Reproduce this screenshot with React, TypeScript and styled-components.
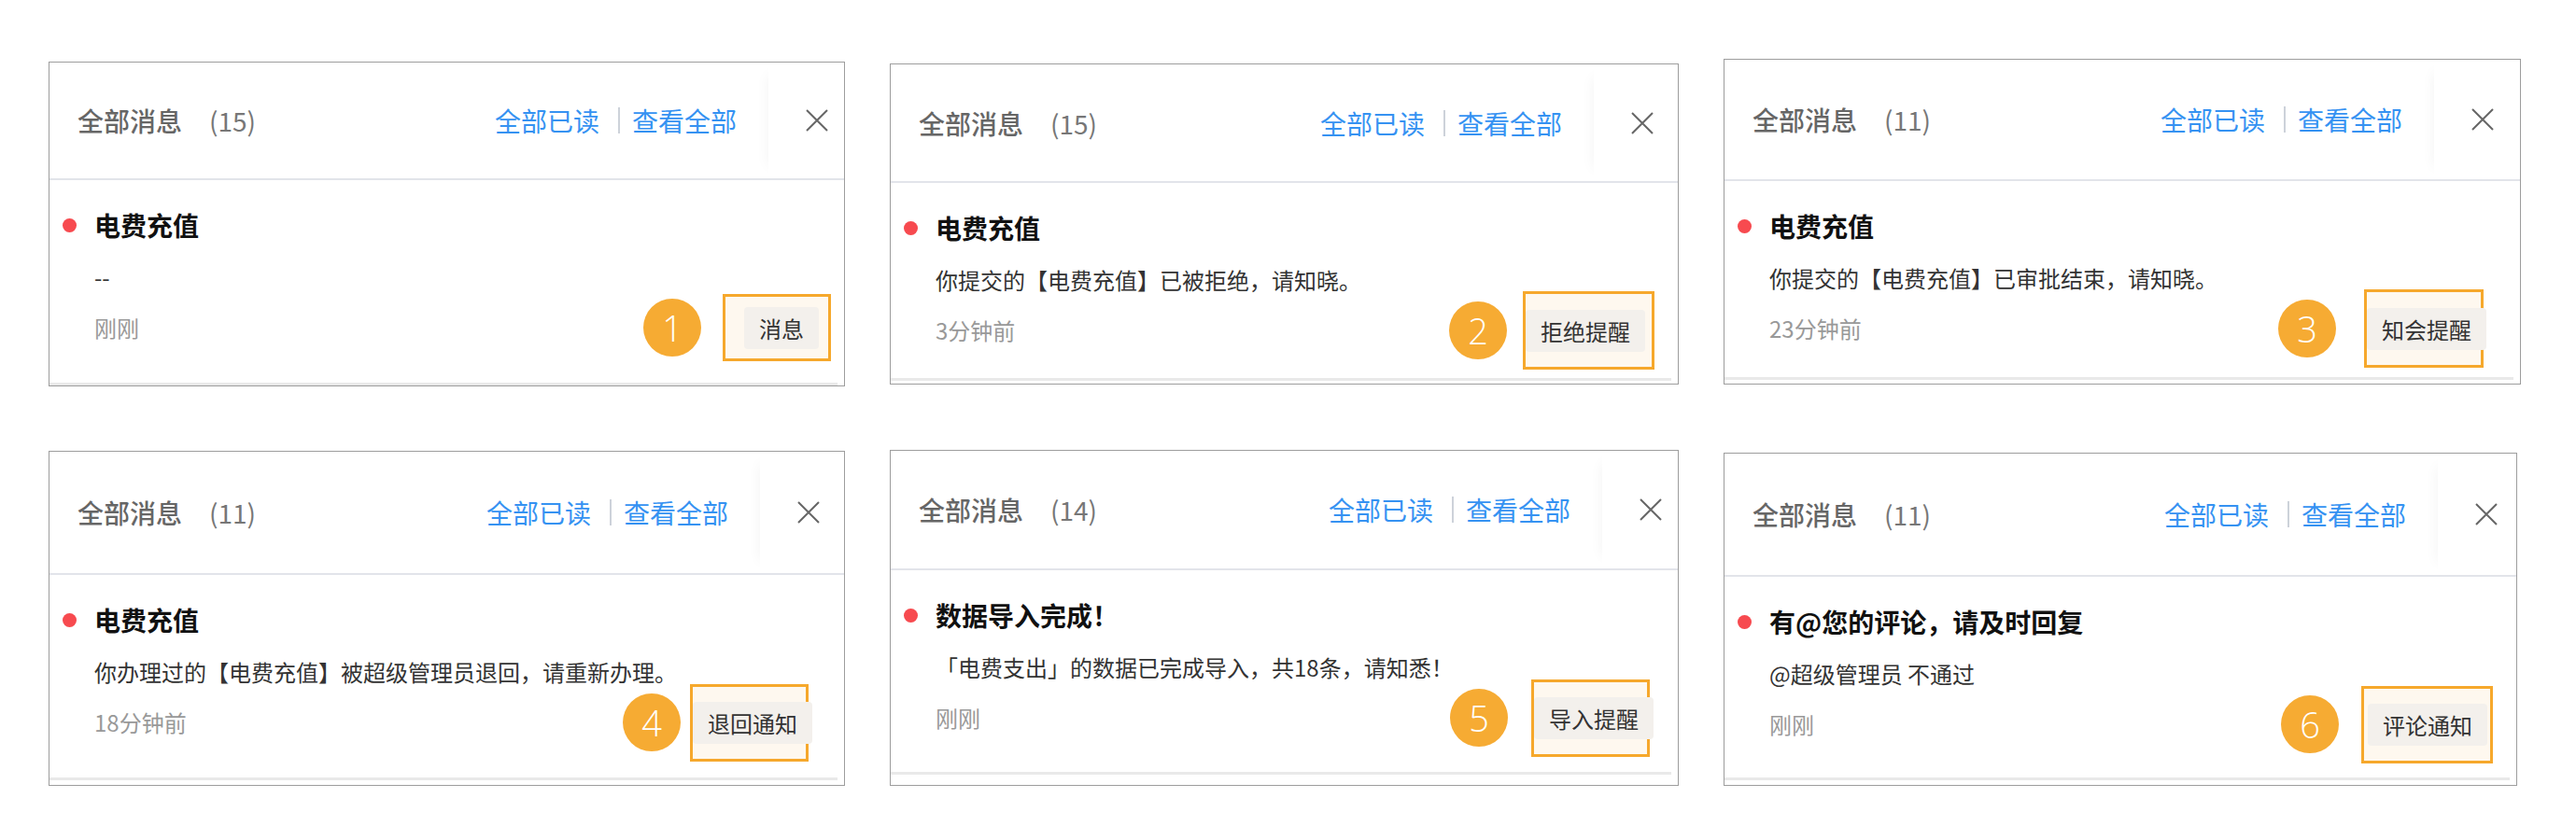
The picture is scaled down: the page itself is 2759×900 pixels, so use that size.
import React from 'react';
import styled, { createGlobalStyle } from 'styled-components';

const GlobalStyle = createGlobalStyle`
  body {
    margin: 0;
    background: #fff;
    font-family: "Noto Sans CJK SC", "Noto Sans", sans-serif;
  }
`;

const Page = styled.div`
  display: grid;
  grid-template-columns: 853px 845px 854px;
  column-gap: 48px;
  row-gap: 68px;
  align-items: start;
  padding: 63px 0 0 52px;
`;

const Card = styled.div<{ $w: number; $h: number; $top: number }>`
  box-sizing: border-box;
  width: ${p => p.$w}px;
  height: ${p => p.$h}px;
  margin-top: ${p => p.$top}px;
  display: flex;
  flex-direction: column;
  border: 1px solid #9d9d9d;
  background: #fff;
`;

const Header = styled.div<{ $h: number }>`
  display: flex;
  align-items: center;
  height: ${p => p.$h}px;
  padding-left: 30px;
  flex-shrink: 0;
`;

const HeaderTitle = styled.span`
  font-size: 28px;
  font-weight: 500;
  color: #666;
  white-space: nowrap;
`;

const Count = styled.span`
  margin-left: 29px;
  font-size: 28px;
  color: #777;
`;

const Links = styled.div`
  display: flex;
  align-items: center;
  margin-left: auto;
  margin-right: 34px;
`;

const LinkText = styled.span`
  font-size: 28px;
  color: #3592f2;
  white-space: nowrap;
`;

const LinkSep = styled.span`
  width: 2px;
  height: 28px;
  margin: 0 13px 0 20px;
  background: #cdd2da;
`;

const CloseCol = styled.div<{ $w: number }>`
  box-sizing: border-box;
  align-self: stretch;
  width: ${p => p.$w}px;
  padding-left: 40px;
  display: flex;
  align-items: center;
  box-shadow: -14px 0 14px -14px rgba(0, 0, 0, 0.05);
`;

const Divider = styled.div`
  height: 2px;
  background: #e2e4ea;
  flex-shrink: 0;
`;

const Body = styled.div`
  display: flex;
  flex-direction: column;
  padding: 31px 0 0 48px;
`;

const TitleRow = styled.div`
  display: flex;
  align-items: center;
  gap: 19px;
  margin-left: -34px;
  height: 34px;
`;

const Dot = styled.span`
  width: 15px;
  height: 15px;
  border-radius: 50%;
  background: #f74a4f;
  flex-shrink: 0;
`;

const Title = styled.span`
  font-size: 28px;
  line-height: 34px;
  font-weight: 700;
  color: #111;
  white-space: nowrap;
`;

const Desc = styled.div`
  margin-top: 24px;
  height: 30px;
  line-height: 30px;
  font-size: 24px;
  color: #333;
  white-space: nowrap;
`;

const Footer = styled.div`
  display: flex;
  align-items: center;
  height: 84px;
  margin-top: -3px;
`;

const Time = styled.span`
  font-size: 24px;
  line-height: 30px;
  color: #999;
`;

const Marker = styled.span<{ $gap: number }>`
  margin-left: auto;
  margin-right: ${p => p.$gap}px;
  width: 62px;
  height: 62px;
  border-radius: 50%;
  background: #f6ab33;
  color: #fff;
  display: flex;
  align-items: center;
  justify-content: center;
  font-family: "Open Sans", "DejaVu Sans", sans-serif;
  font-weight: 300;
  font-size: 38px;
  flex-shrink: 0;
`;

const Highlight = styled.div<{ $w: number; $h: number; $pl: number; $r: number }>`
  box-sizing: border-box;
  width: ${p => p.$w}px;
  height: ${p => p.$h}px;
  margin-right: ${p => p.$r}px;
  padding-left: ${p => p.$pl}px;
  display: flex;
  align-items: center;
  border: 3px solid #f6a82c;
  background: #fef8ef;
  flex-shrink: 0;
`;

const TypeButton = styled.span`
  height: 45px;
  padding: 0 16px;
  display: flex;
  align-items: center;
  border-radius: 4px;
  background: #f3f0ec;
  font-size: 24px;
  color: #333;
  white-space: nowrap;
`;

const BottomRule = styled.div<{ $mb: number }>`
  margin: auto 7px ${p => p.$mb}px 0;
  height: 3px;
  background: #e9e9e9;
`;

const CloseIcon = () => (
  <svg width="24" height="24" viewBox="0 0 24 24">
    <path d="M1 1 L23 23 M23 1 L1 23" stroke="#666" strokeWidth="2" fill="none" />
  </svg>
);

type Item = {
  w: number;
  h: number;
  top: number;
  headH: number;
  closeW: number;
  count: number;
  title: string;
  desc: string;
  time: string;
  tag: string;
  num: number;
  gap: number;
  r: number;
  hw: number;
  hh: number;
  pl: number;
  mb: number;
};

const items: Item[] = [
  { w: 853, h: 348, top: 3, headH: 124, closeW: 81, count: 15, title: '电费充值', desc: '--', time: '刚刚', tag: '消息', num: 1, gap: 23, r: 14, hw: 116, hh: 72, pl: 20, mb: 0 },
  { w: 845, h: 344, top: 5, headH: 125, closeW: 90, count: 15, title: '电费充值', desc: '你提交的【电费充值】已被拒绝，请知晓。', time: '3分钟前', tag: '拒绝提醒', num: 2, gap: 17, r: 25, hw: 141, hh: 84, pl: 0, mb: 3 },
  { w: 854, h: 349, top: 0, headH: 128, closeW: 92, count: 11, title: '电费充值', desc: '你提交的【电费充值】已审批结束，请知晓。', time: '23分钟前', tag: '知会提醒', num: 3, gap: 30, r: 39, hw: 128, hh: 84, pl: 0, mb: 4 },
  { w: 853, h: 359, top: 1, headH: 130, closeW: 90, count: 11, title: '电费充值', desc: '你办理过的【电费充值】被超级管理员退回，请重新办理。', time: '18分钟前', tag: '退回通知', num: 4, gap: 10, r: 38, hw: 127, hh: 83, pl: 0, mb: 5 },
  { w: 845, h: 360, top: 0, headH: 126, closeW: 81, count: 14, title: '数据导入完成！', desc: '「电费支出」的数据已完成导入，共18条，请知悉！', time: '刚刚', tag: '导入提醒', num: 5, gap: 25, r: 30, hw: 127, hh: 83, pl: 0, mb: 11 },
  { w: 850, h: 357, top: 3, headH: 130, closeW: 84, count: 11, title: '有@您的评论，请及时回复', desc: '@超级管理员 不通过', time: '刚刚', tag: '评论通知', num: 6, gap: 24, r: 25, hw: 141, hh: 83, pl: 4, mb: 5 },
];

const NoticeCard = ({ item }: { item: Item }) => (
  <Card $w={item.w} $h={item.h} $top={item.top}>
    <Header $h={item.headH}>
      <HeaderTitle>全部消息</HeaderTitle>
      <Count>({item.count})</Count>
      <Links>
        <LinkText>全部已读</LinkText>
        <LinkSep />
        <LinkText>查看全部</LinkText>
      </Links>
      <CloseCol $w={item.closeW}>
        <CloseIcon />
      </CloseCol>
    </Header>
    <Divider />
    <Body>
      <TitleRow>
        <Dot />
        <Title>{item.title}</Title>
      </TitleRow>
      <Desc>{item.desc}</Desc>
      <Footer>
        <Time>{item.time}</Time>
        <Marker $gap={item.gap}>{item.num}</Marker>
        <Highlight $w={item.hw} $h={item.hh} $pl={item.pl} $r={item.r}>
          <TypeButton>{item.tag}</TypeButton>
        </Highlight>
      </Footer>
    </Body>
    <BottomRule $mb={item.mb} />
  </Card>
);

export default function App() {
  return (
    <>
      <GlobalStyle />
      <Page>
        {items.map(item => (
          <NoticeCard key={item.num} item={item} />
        ))}
      </Page>
    </>
  );
}
